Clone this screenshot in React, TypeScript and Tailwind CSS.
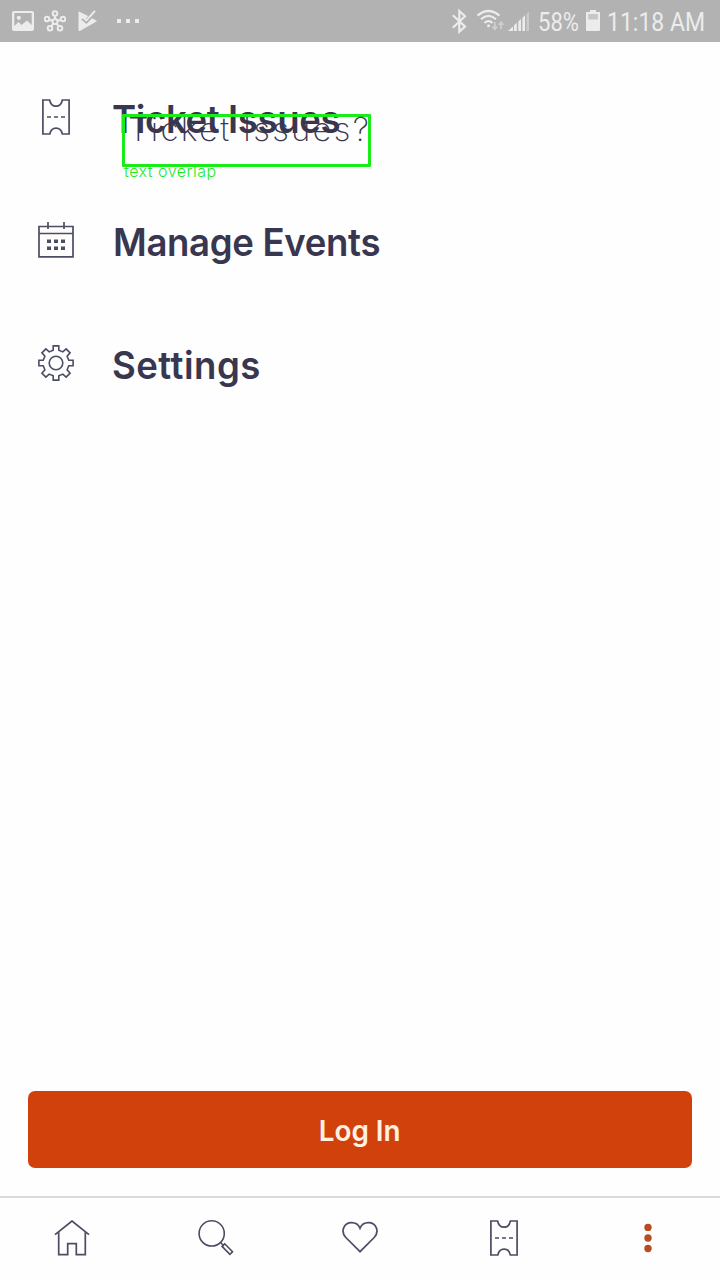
import type { ReactNode } from "react";

const ink = "#4b4d63";

function TicketIcon() {
  return (
    <svg width="36" height="36" viewBox="0 0 36 36" fill="none" stroke={ink} strokeWidth="1.7" className="block shrink-0">
      <path d="M4.9 1H11.6C12.4 5 14.6 7.2 18 7.2S23.6 5 24.4 1H31.1V35H24.4C23.6 31.3 21.4 29.1 18 29.1S12.6 31.3 11.8 35H4.9Z" />
      <path d="M9 18h4M16 18h4M23 18h4" />
    </svg>
  );
}

function CalendarIcon() {
  return (
    <svg width="36" height="36" viewBox="0 0 36 36" fill="none" stroke={ink} strokeWidth="1.7" className="block shrink-0">
      <path d="M1 4.5H35V34.8H1ZM1 11.5H35M10 0V7M26 0V7" />
      <path d="M9 19.2h4M16 19.2h4M23 19.2h4M9 26.2h4M16 26.2h4M23 26.2h4" strokeWidth="3.6" />
    </svg>
  );
}

function GearIcon() {
  return (
    <svg width="36" height="36" viewBox="0 0 36 36" fill="none" stroke={ink} strokeWidth="1.6" strokeLinejoin="miter" className="block shrink-0">
      <path d="M15.2 .9H20.8V5.2L24.8 6.9L28.1 3.9L32.1 7.9L29.1 11.2L30.8 15.2H35.1V20.8H30.8L29.1 24.8L32.1 28.1L28.1 32.1L24.8 29.1L20.8 30.8V35.1H15.2V30.8L11.2 29.1L7.9 32.1L3.9 28.1L6.9 24.8L5.2 20.8H.9V15.2H5.2L6.9 11.2L3.9 7.9L7.9 3.9L11.2 6.9L15.2 5.2Z" />
      <circle cx="18" cy="18" r="6.8" />
    </svg>
  );
}

function MenuRow({ icon, children }: { icon: ReactNode; children: ReactNode }) {
  return (
    <li className="relative flex h-[123px] items-center pl-[38px]">
      <span className="mb-px">{icon}</span>
      {children}
    </li>
  );
}

function StatusBar() {
  return (
    <header className="flex h-[42px] shrink-0 items-center bg-[#b2b2b2] pl-3 text-[#ececec]">
      <svg width="22" height="42" viewBox="12 0 22 42" fill="currentColor">
        <path fillRule="evenodd" d="M14 11H32Q34 11 34 13V29Q34 31 32 31H14Q12 31 12 29V13Q12 11 14 11ZM14.3 13V26L18.5 22L21.5 25L27 20.5L31.7 25V13Z" />
        <circle cx="18.8" cy="17.8" r="2.1" />
      </svg>
      <svg width="22" height="42" viewBox="44 0 22 42" fill="none" stroke="currentColor" strokeWidth="2" className="ml-[10px]">
        <circle cx="55" cy="21.5" r="2.5" />
        <circle cx="55" cy="13.5" r="2.3" />
        <circle cx="47" cy="19" r="2.3" />
        <circle cx="63" cy="19" r="2.3" />
        <circle cx="50" cy="28.2" r="2.3" />
        <circle cx="60" cy="28.2" r="2.3" />
        <path d="M55 16v3M49.3 19.7l3.1 1M60.7 19.7l-3.1 1M51.4 26.2l2-2.5M58.6 26.2l-2-2.5" />
      </svg>
      <svg width="20" height="42" viewBox="78 0 20 42" className="ml-3">
        <path d="M79 11.5L91 17.5L97 21L79.5 31Q78.5 31 78.5 30V12Z" fill="currentColor" />
        <path d="M82.5 18.5L85.5 22L94 12.5" fill="none" stroke="#b2b2b2" strokeWidth="4" />
        <path d="M84 20.5L87 23.2L97 21L79.5 31V20Z" fill="currentColor" />
        <path d="M82.5 19.5L86.5 23L95 13.5" transform="translate(0 -2.6)" fill="none" stroke="currentColor" strokeWidth="2" />
        <path d="M82.5 19.5L86.2 23L91.5 17.5" fill="none" stroke="#b2b2b2" strokeWidth="1.5" />
      </svg>
      <svg width="24" height="42" viewBox="116 0 24 42" fill="currentColor" className="ml-[18px]">
        <path d="M117 19h4v4h-4zM126 19h4v4h-4zM135 19h4v4h-4z" />
      </svg>
      <div className="ml-auto flex h-full items-center">
        <svg width="88" height="42" viewBox="450 0 88 42" fill="none" stroke="currentColor">
          <path d="M452.8 15.3L465 26.5L459.3 31.8V11L465 16.3L452.8 27.7" strokeWidth="2.2" />
          <path d="M477.5 15.7Q488.5 6.3 499.5 15.7M481 19.3Q488.5 12.5 496 19.3M484.5 22.8Q488.5 19.3 492.5 22.8" strokeWidth="2.2" />
          <circle cx="488.5" cy="25.8" r="1.5" fill="currentColor" stroke="none" />
          <path d="M494.8 22v7M492.5 26.5l2.3 2.8 2.3-2.8M501 29v-6.5M498.7 25l2.3-2.8 2.3 2.8" stroke="#cecece" strokeWidth="1.8" />
          <path d="M508 31L513 26.5V31ZM514 25.2L516.8 22.7V31H514ZM518.3 21.4L521 19V31H518.3ZM522.4 17.7L525 15.3V31H522.4Z" fill="currentColor" stroke="none" />
          <path d="M526.5 14L529 11.5V31H526.5Z" fill="#cbcbcb" stroke="none" />
        </svg>
        <span className="w-12 whitespace-nowrap font-[Roboto,sans-serif] text-[26px] leading-[42px]">
          <span className="mt-[2px] inline-block origin-left scale-x-[0.85]">58%</span>
        </span>
        <svg width="14" height="42" viewBox="586 0 14 42" className="shrink-0">
          <path d="M590 10H596V12H600V30Q600 31 599 31H587Q586 31 586 30V12H590Z" fill="currentColor" />
          <path d="M588.3 14H597.8V19.5H588.3Z" fill="#c6c6c6" />
        </svg>
        <span className="ml-[7px] w-[113px] whitespace-nowrap font-[Roboto,sans-serif] text-[26px] leading-[42px]">
          <span className="mt-[2px] inline-block origin-left scale-x-[0.885]">11:18 AM</span>
        </span>
      </div>
    </header>
  );
}

const labelBase = "mt-[3px] origin-left scale-x-[0.95] whitespace-nowrap font-semibold text-[38.5px] leading-none text-[#39364f]";

export default function App() {
  return (
    <div className="flex h-[1280px] w-[720px] flex-col overflow-hidden bg-[#fefefe] font-[Inter,sans-serif]">
      <StatusBar />
      <ul className="flex-1 pt-[14px]">
        <MenuRow icon={<TicketIcon />}>
          <span className={`${labelBase} ml-[38px] tracking-[-0.4px]`}>Ticket Issues</span>
          <div className="absolute left-[122px] top-[58px] h-[53px] w-[249px] rounded-[1px] border-[3px] border-[#1aec1a]">
            <span className="absolute left-[3px] top-[-5px] whitespace-nowrap text-[33px] font-extralight leading-[34px] tracking-[2.2px] text-[#39364f]">Ticket Issues?</span>
          </div>
          <span className="absolute left-[124px] top-[106px] whitespace-nowrap text-[16px] font-light leading-[18px] tracking-[0.5px] text-[#1aec1a]">text overlap</span>
        </MenuRow>
        <MenuRow icon={<CalendarIcon />}>
          <span className={`${labelBase} ml-[39px] tracking-[-0.35px]`}>Manage Events</span>
        </MenuRow>
        <MenuRow icon={<GearIcon />}>
          <span className={`${labelBase} ml-[38px] tracking-[0.5px]`}>Settings</span>
        </MenuRow>
      </ul>
      <div className="px-7 pb-7">
        <button className="flex h-[77px] w-full items-center justify-center rounded-[7px] bg-[#d1410c] text-[29px] font-semibold text-[#fff0e2]">
          <span className="mt-[2px] scale-x-[0.96]">Log In</span>
        </button>
      </div>
      <nav className="grid h-[84px] shrink-0 grid-cols-5 place-items-center border-t-2 border-[#d9dada] pb-[2px]">
        <svg width="36" height="36" viewBox="0 0 36 36" fill="none" stroke={ink} strokeWidth="1.7">
          <path d="M1 14.7L18 1L35 14.7M4.7 12V34.7H13.7V23.6H22.3V34.7H31.3V12" />
        </svg>
        <svg width="36" height="36" viewBox="0 0 36 36" fill="none" stroke={ink} strokeWidth="1.6">
          <circle cx="13.7" cy="13.4" r="12.6" />
          <path d="M22.5 22.5L26 26M24.1 26.4L26.7 23.8L34.5 31.7L31.9 34.3Z" />
        </svg>
        <svg width="36" height="36" viewBox="0 0 36 36" fill="none" stroke={ink} strokeWidth="1.7">
          <path d="M18 31.7L3.8 17.5C-1.8 11.4 1.8 2.7 9.5 2.7C13.4 2.7 16.8 5.2 18 8.2C19.2 5.2 22.6 2.7 26.5 2.7C34.2 2.7 37.8 11.4 32.2 17.5Z" />
        </svg>
        <TicketIcon />
        <svg width="36" height="36" viewBox="0 0 36 36" fill="#b94b22">
          <circle cx="18" cy="7.4" r="3.7" /><circle cx="18" cy="18" r="3.7" /><circle cx="18" cy="28.5" r="3.7" />
        </svg>
      </nav>
    </div>
  );
}
